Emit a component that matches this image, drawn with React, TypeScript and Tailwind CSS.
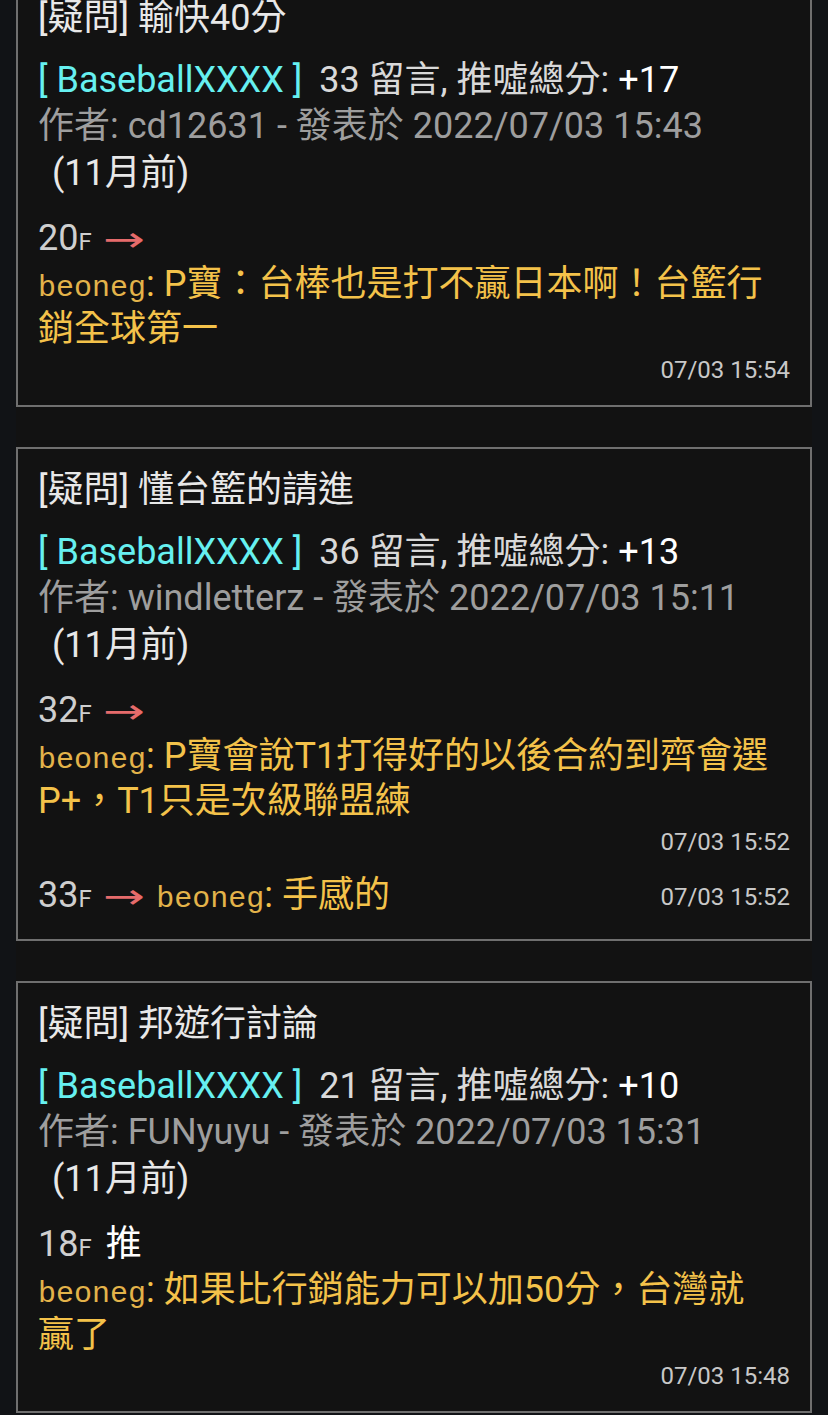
import React from "react";

type Push = {
  floor: string;
  tag: "arrow" | "push";
  lines: string[];
  time: string;
  inline?: boolean;
};

type Post = {
  title: string;
  count: string;
  score: string;
  author: string;
  date: string;
  pushes: Push[];
};

const posts: Post[] = [
  {
    title: "[疑問] 輸快40分",
    count: "33",
    score: "+17",
    author: "cd12631",
    date: "2022/07/03 15:43",
    pushes: [
      {
        floor: "20",
        tag: "arrow",
        lines: ["P寶：台棒也是打不贏日本啊！台籃行", "銷全球第一"],
        time: "07/03 15:54",
      },
    ],
  },
  {
    title: "[疑問] 懂台籃的請進",
    count: "36",
    score: "+13",
    author: "windletterz",
    date: "2022/07/03 15:11",
    pushes: [
      {
        floor: "32",
        tag: "arrow",
        lines: ["P寶會說T1打得好的以後合約到齊會選", "P+，T1只是次級聯盟練"],
        time: "07/03 15:52",
      },
      {
        floor: "33",
        tag: "arrow",
        lines: ["手感的"],
        time: "07/03 15:52",
        inline: true,
      },
    ],
  },
  {
    title: "[疑問] 邦遊行討論",
    count: "21",
    score: "+10",
    author: "FUNyuyu",
    date: "2022/07/03 15:31",
    pushes: [
      {
        floor: "18",
        tag: "push",
        lines: ["如果比行銷能力可以加50分，台灣就", "贏了"],
        time: "07/03 15:48",
      },
    ],
  },
];

function FloorTag({ p }: { p: Push }) {
  return (
    <span className="whitespace-nowrap">
      <span className="text-[#cfcfcf]">{p.floor}</span>
      <span className="text-[24px] leading-none text-[#cfcfcf]">F</span>
      {p.tag === "arrow" ? (
        <span className="relative top-[3px] ml-[11px] inline-block scale-x-[1.25] scale-y-[0.85] origin-left leading-none text-[#e56b6b] font-['DejaVu_Sans',sans-serif] text-[40px]">→</span>
      ) : (
        <span className="ml-[14px] text-[#ffffff]">推</span>
      )}
    </span>
  );
}

function User() {
  return (
    <>
      <span className="font-['Liberation_Mono',monospace] text-[30px] leading-none text-[#e3b34a]">beoneg</span>
      <span className="text-[#f4c24a]">:</span>{" "}
    </>
  );
}

function PushBlock({ p }: { p: Push }) {
  if (p.inline) {
    return (
      <div className="mt-[12px] pb-[4px] flex items-center justify-between h-[50px] leading-[46px]">
        <div className="whitespace-nowrap">
          <FloorTag p={p} />
          <span className="ml-[20px]">
            <User />
          </span>
          <span className="text-[#f4c24a]">{p.lines[0]}</span>
        </div>
        <div className="text-[24px] text-[#c8c8c8] leading-[24px] pt-[4px]">{p.time}</div>
      </div>
    );
  }
  return (
    <div className="mt-[19px]">
      <div className="h-[46px] leading-[46px]">
        <FloorTag p={p} />
      </div>
      <div className="mt-[1px] text-[#f4c24a]">
        {p.lines.map((l, i) => (
          <div key={i} className="h-[45px] leading-[45px] whitespace-nowrap">
            {i === 0 && <User />}
            {l}
          </div>
        ))}
      </div>
      <div className="h-[36px] text-right text-[24px] leading-[36px] text-[#c8c8c8]">{p.time}</div>
    </div>
  );
}

function Card({ post }: { post: Post }) {
  return (
    <div className="border-2 border-[#6f6f6f] bg-[#121212] px-[20px] pt-[18px] pb-[17px]">
      <div className="h-[46px] leading-[46px] text-[#e8e8e8]">{post.title}</div>
      <div className="mt-[16px] h-[46px] leading-[46px] whitespace-nowrap">
        <span className="text-[#66f0f0]">[ BaseballXXXX ]</span>
        <span className="ml-[8px] text-[#d9d9d9]"> {post.count} 留言, 推噓總分: </span>
        <span className="text-[#ffffff]">{post.score}</span>
      </div>
      <div className="h-[46px] leading-[46px] text-[#9e9e9e] whitespace-nowrap">
        作者: {post.author} - 發表於 {post.date}
      </div>
      <div className="mt-[1px] h-[46px] pl-[14px] leading-[46px] text-[#e8e8e8]">(11月前)</div>
      {post.pushes.map((p, i) => (
        <PushBlock key={i} p={p} />
      ))}
    </div>
  );
}

export default function App() {
  return (
    <div className="h-[1415px] overflow-hidden bg-[#111316] text-[36px] font-['Roboto','Noto_Sans_CJK_TC',sans-serif]">
      <div className="mx-4 -mt-[25px] flex flex-col gap-[40px] bg-[#121212]">
        {posts.map((p, i) => (
          <Card key={i} post={p} />
        ))}
      </div>
    </div>
  );
}
